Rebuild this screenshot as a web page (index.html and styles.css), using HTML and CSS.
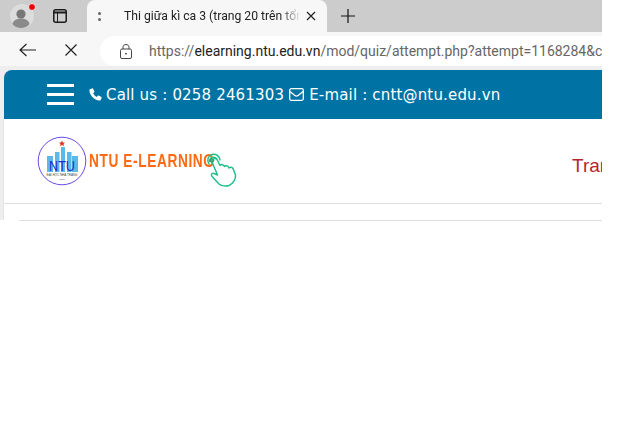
FILE: index.html
```html
<!DOCTYPE html>
<html lang="vi">
<head>
    <meta charset="UTF-8">
    <title>Thi giữa kì ca 3</title>
    <link rel="stylesheet" href="styles.css">
</head>
<body>
    <div class="window">
        <div class="tabstrip">
            <div class="avatar">
                <svg width="26" height="26" viewBox="0 0 26 26">
                    <circle cx="13" cy="13" r="12" fill="#dcdcdc"/>
                    <circle cx="12" cy="11" r="4.6" fill="#777"/>
                    <path d="M3.5 21c1-4 4.500-5.500 8.500-5.500s7.500 1.500 8.500 5.500c-2 2.500-5 4-8.500 4s-6.500-1.500-8.500-4z" fill="#8a8a8a"/>
                </svg>
                <span class="avatar-dot"></span>
            </div>
            <svg class="tab-toggle" width="14" height="14" viewBox="0 0 14 14" fill="none" stroke="#1b1b1b">
                <rect x="0.75" y="0.75" width="12.500" height="12.500" rx="2" stroke-width="1.500"/>
                <path d="M1 3.500h12" stroke-width="2"/>
                <path d="M4.500 4v9" stroke-width="1"/>
            </svg>
            <div class="tab">
                <span class="tab-dots">
                    <i></i><i></i>
                </span>
                <span class="tab-title">Thi giữa kì ca 3 (trang 20 trên tổng số 40)</span>
                <svg class="tab-close" width="10" height="10" viewBox="0 0 10 10" stroke="#222" stroke-width="1.200">
                    <path d="M1 1l8 8M9 1l-8 8"/>
                </svg>
            </div>
            <svg class="new-tab" width="14" height="14" viewBox="0 0 14 14" stroke="#111" stroke-width="1.200">
                <path d="M7 0v14M0 7h14"/>
            </svg>
        </div>

        <div class="toolbar">
            <svg class="back" width="18" height="14" viewBox="0 0 18 14" fill="none" stroke="#222" stroke-width="1.200">
                <path d="M17 7H1M7.500 1L1 7l6.500 6"/>
            </svg>
            <svg class="stop" width="12" height="12" viewBox="0 0 12 12" stroke="#222" stroke-width="1.200">
                <path d="M0.500 0.500l11 11M11.500 0.500l-11 11"/>
            </svg>
            <div class="urlbar">
                <svg class="lock" width="12" height="15" viewBox="0 0 12 15" fill="none" stroke="#444" stroke-width="1">
                    <rect x="0.500" y="5" width="11" height="9.500" rx="1.500"/>
                    <path d="M3 5V3.200C3 1.600 4.300 0.500 6 0.500s3 1.100 3 2.700V5"/>
                    <circle cx="6" cy="9.700" r="0.900" fill="#444" stroke="none"/>
                </svg>
                <span class="url"><span class="url-dim">https://</span>elearning.ntu.edu.vn<span class="url-dim">/mod/quiz/attempt.php?attempt=1168284&amp;cmid=52144</span></span>
            </div>
        </div>

        <div class="page">
            <div class="topbar">
                <div class="burger"><i></i><i></i><i></i></div>
                <div class="contact">
                    <svg class="icon-phone" width="13" height="13" viewBox="0 0 13 13">
                        <path d="M3.100 0.400L1 1.300C0.500 1.600 0.300 2 0.400 2.600c0.500 5.300 4.700 9.500 10 10 0.600 0.100 1-0.100 1.300-0.600l0.900-2.100c0.200-0.400 0-0.800-0.300-1L9.700 7.600c-0.300-0.200-0.700-0.100-1 0.200L7.800 8.900C6.300 8.200 4.800 6.700 4.100 5.200l1.100-0.900c0.300-0.300 0.400-0.700 0.200-1L4.100 0.700C3.900 0.400 3.500 0.200 3.100 0.400z" fill="#fff"/>
                    </svg>
                    <span>Call us : 0258 2461303</span>
                    <svg class="icon-mail" width="15" height="13" viewBox="0 0 15 13" fill="none" stroke="#fff" stroke-width="1.300">
                        <rect x="0.700" y="0.700" width="13.600" height="11.600" rx="1.500"/>
                        <path d="M0.900 3.500l5 4c1 0.800 2.200 0.800 3.200 0l5-4"/>
                    </svg>
                    <span>E-mail : cntt@ntu.edu.vn</span>
                </div>
            </div>

            <div class="brandbar">
                <a class="brand">
                    <svg class="seal" width="50" height="50" viewBox="0 0 50 50">
                        <circle cx="25" cy="25" r="23.800" fill="#fff" stroke="#5a35e0" stroke-width="0.900"/>
                        <path d="M25 4.500l0.900 2 2.200 0.200-1.600 1.400 0.500 2.200-2-1.200-2 1.200 0.500-2.200-1.600-1.400 2.200-0.200z" fill="#e0332a"/>
                        <rect x="10" y="20" width="6" height="16" fill="#5cb8e6"/>
                        <rect x="18" y="16" width="4.500" height="20" fill="#5cb8e6"/>
                        <rect x="24" y="11" width="4" height="25" fill="#5cb8e6"/>
                        <rect x="30" y="16" width="4.500" height="20" fill="#5cb8e6"/>
                        <rect x="35" y="20" width="6" height="16" fill="#5cb8e6"/>
                        <text class="seal-ntu" x="12" y="35" textLength="26" lengthAdjust="spacingAndGlyphs">NTU</text>
                        <text class="seal-name" x="25" y="39.800" text-anchor="middle">ĐẠI HỌC NHA TRANG</text>
                        <text class="seal-year" x="25" y="44" text-anchor="middle">1959</text>
                    </svg>
                    <span class="brand-name">NTU E-LEARNING</span>
                    <svg class="hand" width="32" height="36" viewBox="0 0 32 36" fill="none" stroke="#20c08a" stroke-width="1.500" stroke-linejoin="round" stroke-linecap="round">
                        <path d="M4 12C1.500 8 3 3.500 7 2.500S14.500 4 15 8"/>
                        <path d="M4.500 8.500C5 5.500 9 4 11.500 6.500"/>
                        <circle cx="7" cy="8.500" r="2.200" fill="#3f9c52" stroke="none"/>
                        <path d="M7 10l5.500 13-3.500-1.500c-2.500-1-3.500 2-1.500 3.500l6.500 7c2 2 7 2.500 10 1.500 4-1.500 7-6.500 6.500-10.500L28 16.500c-1-1.500-3-1.500-4-0.500-1-2.500-3.500-3-4.500-1.500-1-2-3.500-2.500-4.500-1L12 7.500c-1-2-6-0.500-5 2.500z"/>
                    </svg>
                </a>
                <nav class="menu">Trang chủ</nav>
            </div>

            <div class="content-line"></div>
        </div>
    </div>
</body>
</html>
```

FILE: styles.css
```css
html, body {
    margin: 0;
    padding: 0;
    background-color: #fff;
}

body {
    width: 620px;
    height: 440px;
    overflow: hidden;
}

.window {
    width: 602px;
    height: 221px;
    overflow: hidden;
}

/* browser tabs */
.tabstrip {
    display: flex;
    align-items: center;
    height: 32px;
    background-color: #ccc;
}

.avatar {
    position: relative;
    width: 26px;
    height: 26px;
    margin-left: 9px;
}

.avatar-dot {
    position: absolute;
    top: 0;
    right: -1px;
    width: 6px;
    height: 6px;
    border-radius: 50%;
    background-color: #e8000d;
    border: 1px solid #eee;
}

.tab-toggle {
    margin-left: 18px;
}

.tab {
    display: flex;
    align-items: center;
    align-self: stretch;
    width: 240px;
    margin-left: 20px;
    background-color: #f7f7f7;
    border-radius: 8px 8px 0 0;
}

.tab-dots {
    display: flex;
    flex-direction: column;
    gap: 3px;
    margin-left: 11px;
}

.tab-dots i {
    display: block;
    width: 3px;
    height: 3px;
    border-radius: 50%;
    background-color: #666;
}

.tab-title {
    flex: 1;
    margin-left: 23px;
    overflow: hidden;
    white-space: nowrap;
    font-family: Roboto, sans-serif;
    font-size: 12.200px;
    color: #222;
    -webkit-mask-image: linear-gradient(to right, #000 88%, transparent);
    mask-image: linear-gradient(to right, #000 88%, transparent);
}

.tab-close {
    margin: 0 11px 0 5px;
}

.new-tab {
    margin-left: 14px;
}

/* address bar */
.toolbar {
    display: flex;
    align-items: center;
    height: 34px;
    background-color: #f7f7f7;
}

.back {
    margin: 2px 0 0 19px;
}

.stop {
    margin: 2px 0 0 28px;
}

.urlbar {
    display: flex;
    align-items: center;
    flex: 1;
    align-self: flex-end;
    height: 30px;
    margin: 0 -20px 0 23px;
    background-color: #fff;
    border-radius: 15px 0 0 15px;
    min-width: 0;
}

.lock {
    margin-left: 20px;
    flex-shrink: 0;
}

.url {
    margin-left: 17px;
    white-space: nowrap;
    font-family: Roboto, sans-serif;
    font-size: 14px;
    color: #222;
}

.url-dim {
    color: #666;
}

/* page */
.page {
    padding-top: 4px;
    background-color: #eee;
}

.topbar {
    display: flex;
    align-items: center;
    height: 49px;
    margin-left: 4px;
    padding-left: 43px;
    background-color: #0073a5;
    border-radius: 8px 0 0 0;
}

.burger {
    display: flex;
    flex-direction: column;
    gap: 6px;
    width: 27px;
}

.burger i {
    display: block;
    height: 3px;
    background-color: #fff;
}

.contact {
    display: flex;
    align-items: center;
    margin-left: 15px;
    white-space: nowrap;
    font-family: "DejaVu Sans", sans-serif;
    font-size: 15px;
    letter-spacing: 0.17px;
    color: #fff;
}

.icon-phone {
    margin-right: 4px;
}

.icon-mail {
    margin: 0 5px;
}

.brandbar {
    display: flex;
    align-items: center;
    justify-content: space-between;
    height: 84px;
    margin-left: 3px;
    background-color: #fff;
    border-left: 1px solid #e4e4e4;
    border-bottom: 1px solid #e0e0e0;
}

.brand {
    position: relative;
    display: flex;
    align-items: center;
    margin-left: 33px;
}

.seal-ntu {
    font-family: "Liberation Sans", sans-serif;
    font-size: 14px;
    fill: #1a2fd0;
}

.seal-name {
    font-family: "Liberation Sans", sans-serif;
    font-size: 3px;
    fill: #444;
}

.seal-year {
    font-family: "Liberation Sans", sans-serif;
    font-size: 2.500px;
    fill: #444;
}

.brand-name {
    display: inline-block;
    width: 128px;
    margin-left: 2px;
    white-space: nowrap;
    font-family: "Liberation Sans", sans-serif;
    font-weight: bold;
    font-size: 18px;
    letter-spacing: 0.8px;
    color: #ff6a13;
    transform: scaleX(0.76);
    transform-origin: left center;
}

.hand {
    position: absolute;
    left: 168px;
    top: 16px;
}

.menu {
    width: 30px;
    margin-top: 9px;
    overflow: hidden;
    white-space: nowrap;
    font-family: "Liberation Sans", sans-serif;
    font-size: 19px;
    color: #b5262c;
}

.content-line {
    height: 16px;
    margin-left: 3px;
    background-color: #fff;
    border-left: 1px solid #e4e4e4;
}

.content-line::after {
    content: "";
    display: block;
    height: 16px;
    margin-left: 15px;
    border-bottom: 1px solid #e0e0e0;
}
```
